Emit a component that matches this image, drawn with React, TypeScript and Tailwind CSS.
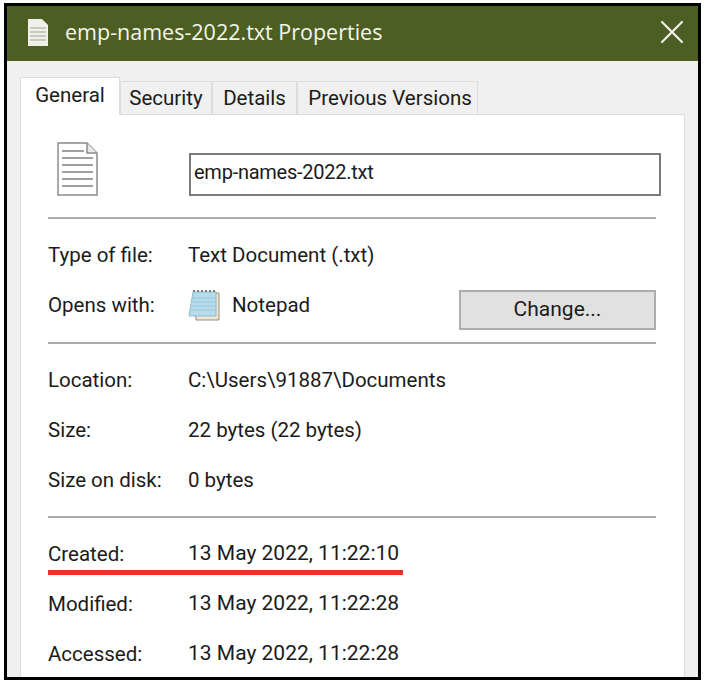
import { X } from "lucide-react";

const Row = ({ label, value, className = "", valueClass = "" }: { label: string; value: string; className?: string; valueClass?: string }) => (
  <div className={`flex h-[30px] items-center ${className}`}>
    <span className="w-[140px] shrink-0">{label}</span>
    <span className={valueClass}>{value}</span>
  </div>
);

const Divider = () => <div className="h-[2px] w-[608px] bg-[#ababab]" />;

const Tab = ({ label, className }: { label: string; className: string }) => (
  <div className={`flex h-[33px] items-center justify-center border border-b-0 border-[#dcdcdc] bg-[#f0f0f0] pt-[1px] ${className}`}>
    {label}
  </div>
);

const FileIcon = () => (
  <svg width="41" height="54" viewBox="0 0 41 54" fill="none">
    <path d="M1 1H30L40 11V53H1Z" fill="#fff" stroke="#8a8a8a" strokeWidth="1.5" />
    <path d="M30 1V11H40" fill="#e8e8e8" stroke="#8a8a8a" strokeWidth="1.5" />
    <path d="M5 9H27M5 16H36M5 23H36M5 30H36M5 37H36M5 44H36" stroke="#a0a0a0" strokeWidth="2" />
  </svg>
);

const NotepadIcon = () => (
  <svg width="32" height="32" viewBox="0 0 32 32" fill="none">
    <path d="M6 4H31V31H8Z" fill="#efe6d2" stroke="#9a8f78" />
    <path d="M5 3H28V27H1Z" fill="#b6dcec" stroke="#8fbcd2" />
    <path d="M5 9H27M4 13H27M4 17H27M3 21H27" stroke="#9cc6da" />
    <path d="M6 3V1M10 3V1M14 3V1M18 3V1M22 3V1M26 3V1" stroke="#555" strokeWidth="1.5" />
  </svg>
);

const App = () => {
  return (
    <div className="h-[684px] w-[710px] bg-white pt-[3px] pl-[4px] font-['Roboto',sans-serif] text-[20.5px] text-[#1b1b1b]">
      <div className="flex h-[677px] w-[697px] flex-col border-[3px] border-black bg-[#f0f0f0]">
        <div className="flex h-[55px] shrink-0 items-center bg-[#4d5e23] pr-[6px] pb-[3px] pl-[21px] text-[#f3f6ea]">
          <svg width="20" height="27" viewBox="0 0 20 27" className="mr-[17px]">
            <path d="M0 0H14L20 6V27H0Z" fill="#f0f0ea" />
            <path d="M2 9H18M2 13H18M2 17H18M2 21H18" stroke="#b9bdb0" strokeWidth="1.5" />
          </svg>
          <span className="flex-1 font-['Open_Sans',sans-serif] text-[21.5px]">emp-names-2022.txt Properties</span>
          <X size={40} strokeWidth={1.3} className="text-[#f0f0f0]" />
        </div>

        <div className="flex flex-1 flex-col pl-[13px]">
          <div className="flex h-[53px] shrink-0 items-end">
            <div className="relative z-10 -mb-[1px] flex h-[38px] w-[100px] items-center justify-center border border-b-0 border-[#dcdcdc] bg-white pb-[2px]">
              General
            </div>
            <Tab label="Security" className="w-[92px]" />
            <Tab label="Details" className="w-[85px]" />
            <Tab label="Previous Versions" className="w-[181px] pl-[5px]" />
          </div>

          <div className="relative w-[665px] flex-1 border-x border-t border-[#dcdcdc] bg-white pl-[27px]">
            <div className="flex h-[102px] items-start pt-[27px]">
              <div className="ml-[9px] w-[132px]">
                <FileIcon />
              </div>
              <div className="mt-[11px] flex h-[43px] w-[472px] items-center border-2 border-[#7a7a7a] pb-[6px] pl-[3px] text-[20px] tracking-[-0.25px]">
                emp-names-2022.txt
              </div>
            </div>
            <Divider />

            <Row label="Type of file:" value="Text Document (.txt)" className="mt-[21px]" />
            <div className="mt-[20px] flex h-[30px] w-[608px] items-center">
              <span className="w-[140px] shrink-0">Opens with:</span>
              <NotepadIcon />
              <span className="ml-[12px]">Notepad</span>
              <button className="-mb-[9px] ml-auto h-[40px] w-[197px] border-2 border-[#adadad] bg-[#e1e1e1] text-[21px]">
                Change...
              </button>
            </div>
            <div className="mt-[22px]">
              <Divider />
            </div>

            <Row label="Location:" value={"C:\\Users\\91887\\Documents"} className="mt-[21px]" />
            <Row label="Size:" value="22 bytes (22 bytes)" className="mt-[20px]" />
            <Row label="Size on disk:" value="0 bytes" className="mt-[20px]" />
            <div className="mt-[21px]">
              <Divider />
            </div>

            <Row label="Created:" value="13 May 2022, 11:22:10" className="mt-[21px]" valueClass="text-[21px]" />
            <Row label="Modified:" value="13 May 2022, 11:22:28" className="mt-[20px]" valueClass="text-[21px]" />
            <Row label="Accessed:" value="13 May 2022, 11:22:28" className="mt-[20px]" valueClass="text-[21px]" />

            {/* red annotation under Created */}
            <div className="absolute top-[455px] left-[27px] h-[5px] w-[355px] bg-[#ee3124]" />
          </div>
        </div>
      </div>
    </div>
  );
};

export default App;
